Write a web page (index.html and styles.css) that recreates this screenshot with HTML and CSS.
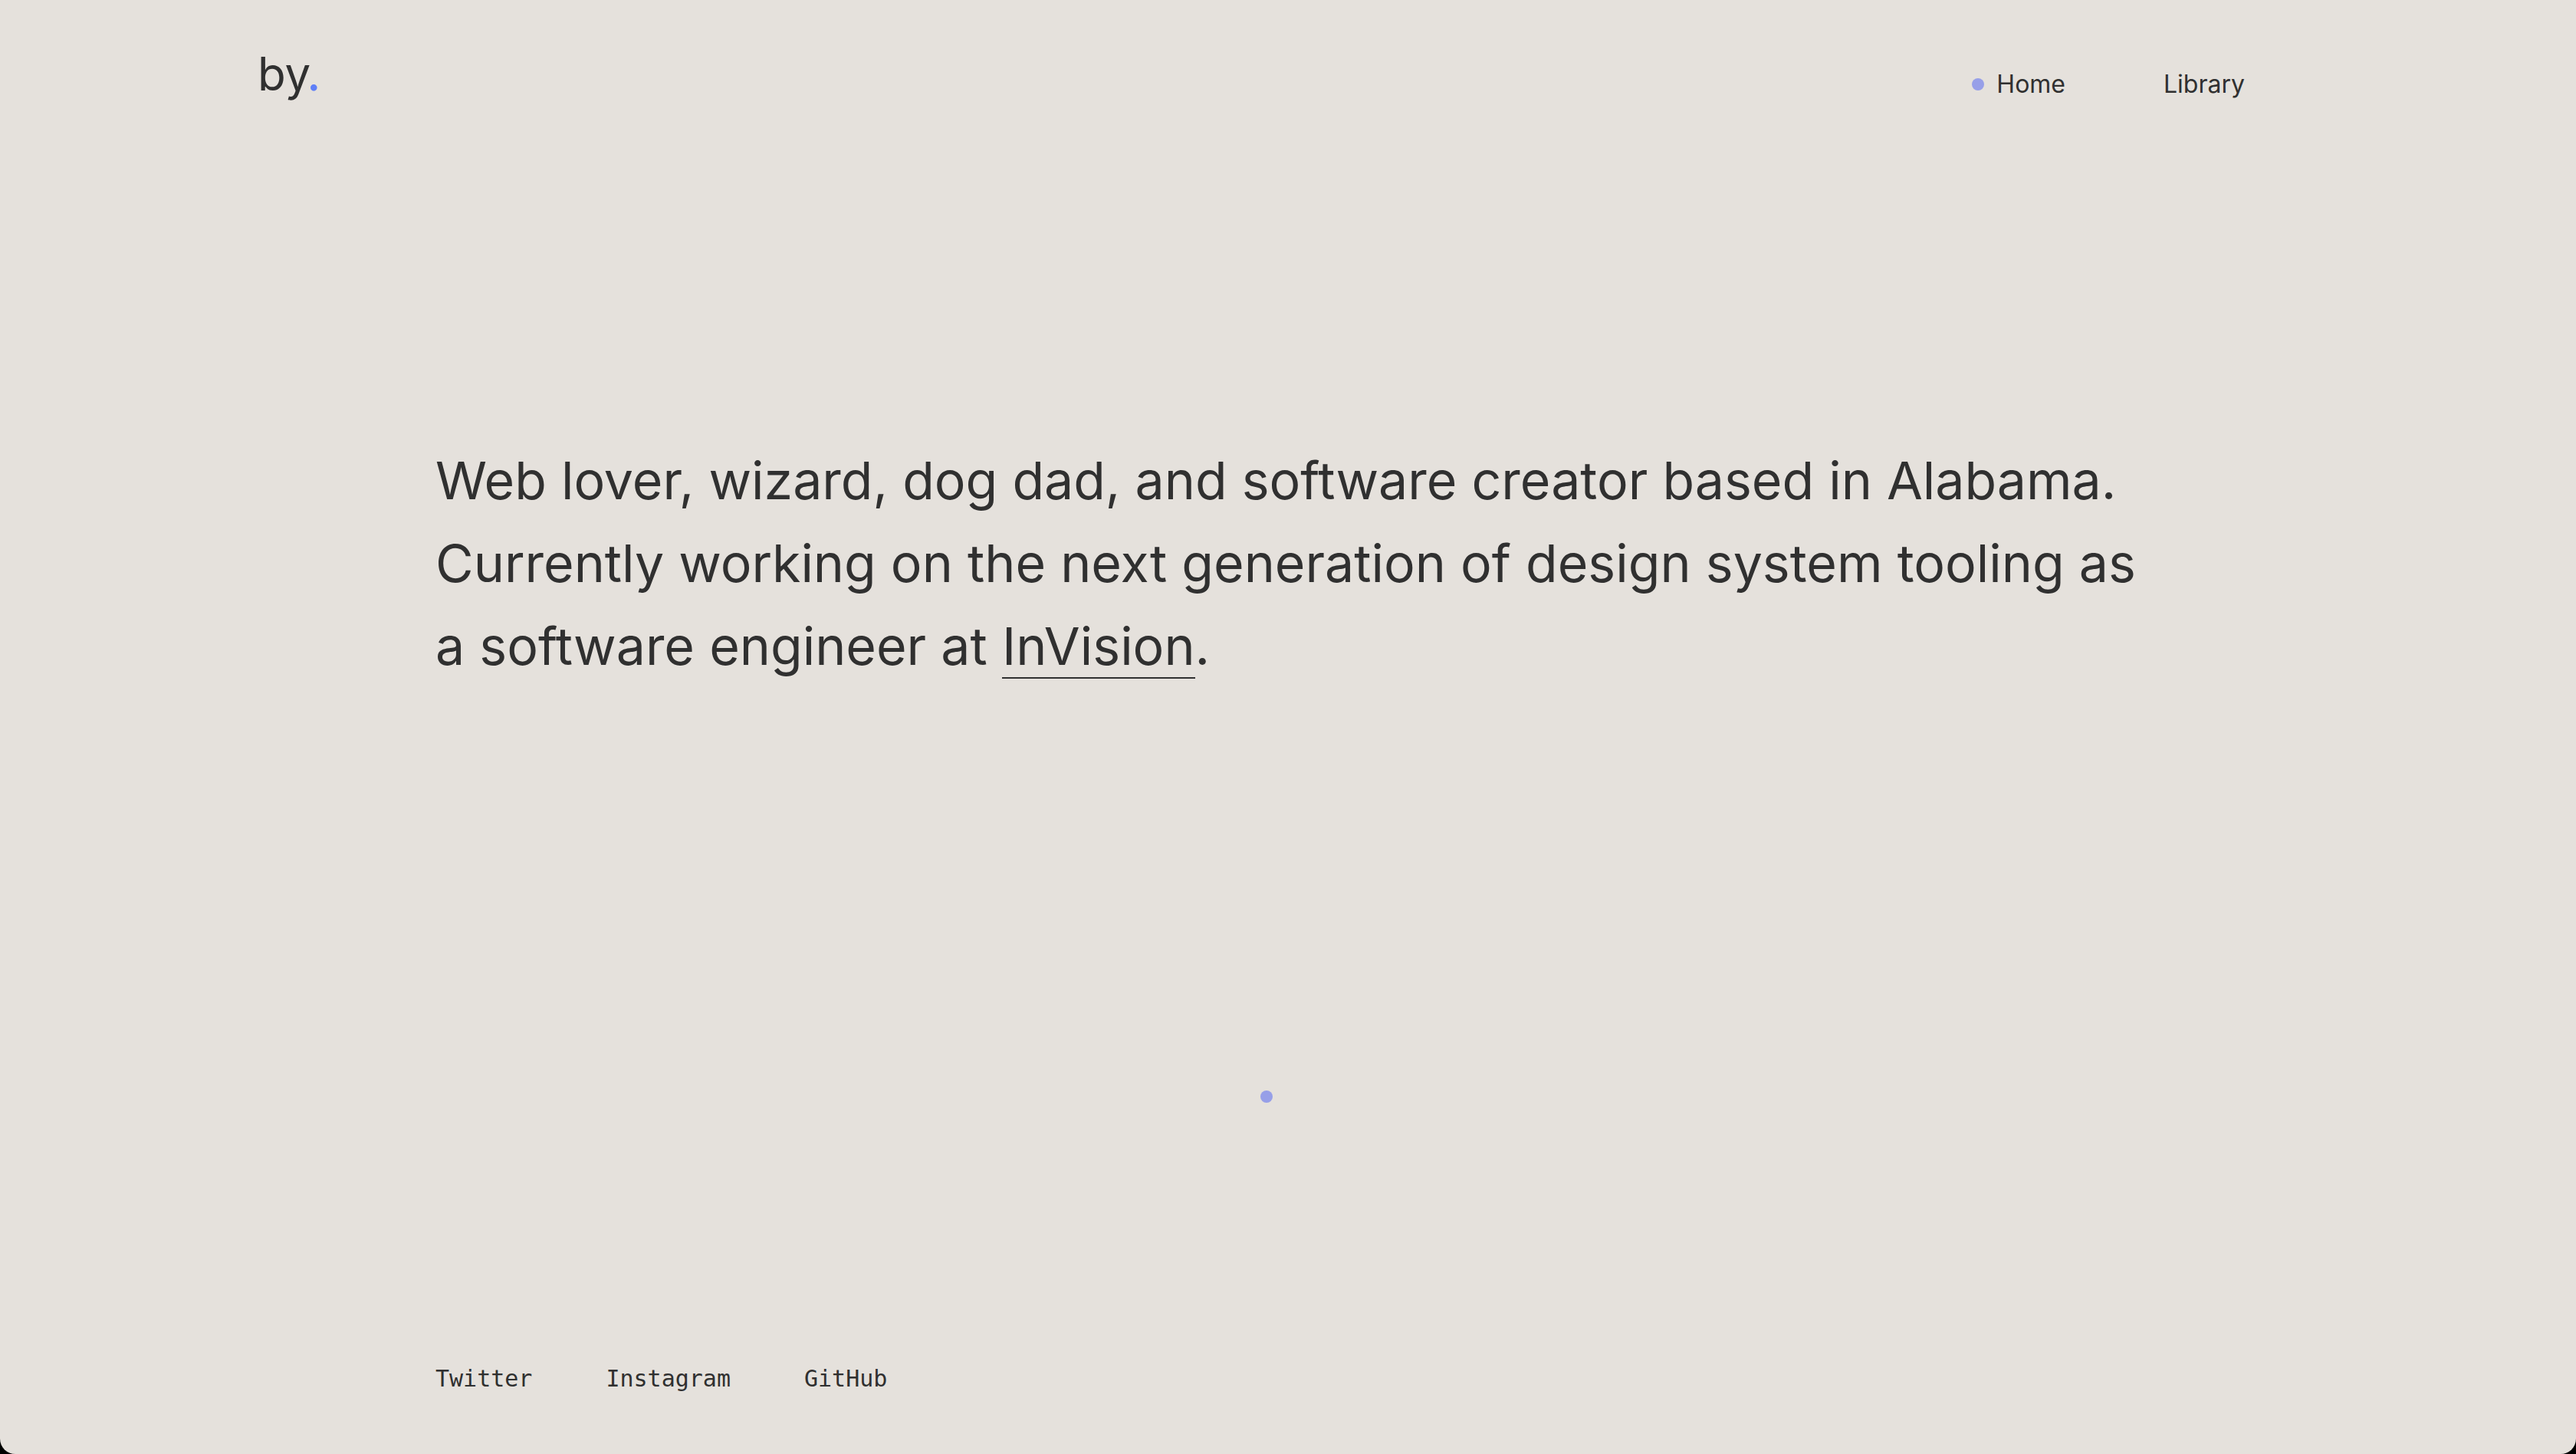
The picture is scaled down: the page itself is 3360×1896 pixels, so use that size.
FILE: index.html
```html
<!DOCTYPE html>
<html lang="en">
<head>
<meta charset="utf-8">
<title>by.</title>
<link rel="stylesheet" href="styles.css">
</head>
<body>
<div class="page">
  <header class="header">
    <a class="logo" href="#">by<span class="logo-dot">.</span></a>
    <nav class="nav">
      <a class="nav-link nav-link-active" href="#">Home</a>
      <a class="nav-link" href="#">Library</a>
    </nav>
  </header>
  <main class="main">
    <p class="intro">Web lover, wizard, dog dad, and software creator based in Alabama.<br>Currently working on the next generation of design system tooling as<br>a software engineer at <a class="intro-link" href="#">InVision</a>.</p>
  </main>
  <footer class="footer">
    <a class="social" href="#">Twitter</a>
    <a class="social" href="#">Instagram</a>
    <a class="social" href="#">GitHub</a>
  </footer>
  <span class="cursor"></span>
</div>
</body>
</html>
```
FILE: styles.css
```css
* { box-sizing: border-box; }
html { background: #000; }
body { margin: 0; font-family: Inter, "Liberation Sans", sans-serif; color: #303030; }
a { color: inherit; text-decoration: none; }
.page { position: relative; min-height: 100vh; display: flex; flex-direction: column; background: #e5e1dc; border-radius: 0 0 20px 20px; }
.header { display: flex; justify-content: space-between; align-items: center; padding: 56px 432px 0 336px; }
.logo { font-size: 60px; line-height: 80px; }
.logo-dot { margin-left: -4px; font-family: Lato, sans-serif; font-size: 68px; line-height: 0; color: #5f7ff7; }
.nav { display: flex; gap: 128px; padding-top: 28px; }
.nav-link { display: flex; align-items: center; gap: 16px; font-size: 32px; line-height: 40px; }
.nav-link-active::before { content: ""; width: 16px; height: 16px; border-radius: 50%; background: #979fe8; }
.main { flex: 1; padding: 436px 568px 0; }
.intro { margin: 0; font-size: 68px; line-height: 108px; white-space: nowrap; }
.intro-link { border-bottom: 2px solid; }
.footer { display: flex; gap: 96px; padding: 0 568px 78px; font-family: "DejaVu Sans Mono", monospace; font-size: 30px; line-height: 40px; }
.cursor { position: absolute; left: calc(50% - 36px); top: 75%; width: 16px; height: 16px; border-radius: 50%; background: #979fe8; }
```
